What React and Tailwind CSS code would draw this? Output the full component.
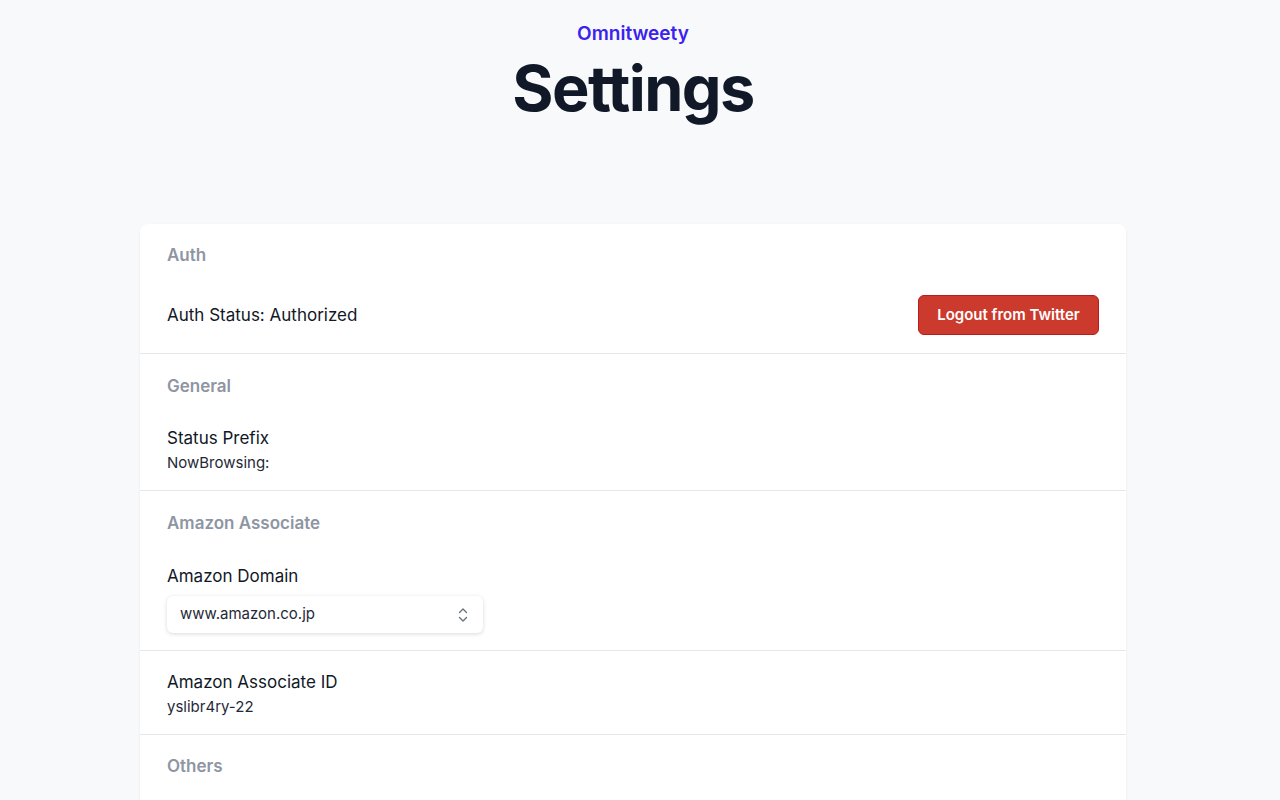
import React from "react";

function Section({ title, children, noHeader, top = "pt-[19px]", bottom = "pb-[18px]", gap = "mt-[28px]" }) {
  return (
    <div className={`border-b border-[#e5e7eb] px-[27px] last:border-b-0 ${top} ${bottom}`}>
      {!noHeader && (
        <h2 className="text-[17px] leading-[24px] font-semibold text-[#8e95a3]">{title}</h2>
      )}
      <div className={noHeader ? "" : gap}>{children}</div>
    </div>
  );
}

function Field({ label, value }) {
  return (
    <div>
      <div className="text-[17px] leading-[24px] text-[#111827]">{label}</div>
      <div className="mt-[3px] text-[15px] leading-[20px] text-[#1f2937]">{value}</div>
    </div>
  );
}

export default function App() {
  return (
    <div
      className="min-h-[800px] bg-[#f8f9fb] pr-[14px]"
      style={{ fontFamily: "Inter, 'Noto Sans', sans-serif" }}
    >
      <header className="flex flex-col items-center pt-[22px]">
        <div className="text-[19px] leading-[24px] font-semibold text-[#3b22ef]">Omnitweety</div>
        <h1 className="mt-[6px] text-[63px] leading-[72px] font-bold tracking-tight text-[#111827]">
          Settings
        </h1>
      </header>
      <main className="mx-auto mt-[100px] w-[986px] overflow-hidden rounded-lg bg-white shadow-[0_1px_3px_rgba(0,0,0,0.06)]">
        <Section title="Auth">
          <div className="flex h-[40px] items-center justify-between">
            <div className="text-[17px] leading-[24px] text-[#111827]">Auth Status: Authorized</div>
            <button className="h-[40px] w-[181px] rounded-md border border-[#b91c1c] bg-[#cb3a2c] text-[15px] font-semibold text-white">
              Logout from Twitter
            </button>
          </div>
        </Section>
        <Section title="General" top="pt-[20px]" bottom="pb-[17px]">
          <Field label="Status Prefix" value="NowBrowsing:" />
        </Section>
        <Section title="Amazon Associate" top="pt-[20px]" bottom="pb-[17px]" gap="mt-[29px]">
          <div className="text-[17px] leading-[24px] text-[#111827]">Amazon Domain</div>
          <div className="mt-[8px] flex h-[37px] w-[316px] items-center justify-between rounded-md bg-white pl-[13px] pr-[13px] shadow-[0_1px_4px_rgba(0,0,0,0.15)]">
            <span className="text-[15px] text-[#1f2937]">www.amazon.co.jp</span>
            <svg width="14" height="18" viewBox="0 0 14 18" fill="none" stroke="#6b7280" strokeWidth="1.4" strokeLinecap="round" strokeLinejoin="round">
              <path d="M3.5 6.5 7 3l3.5 3.5" />
              <path d="M3.5 11.5 7 15l3.5-3.5" />
            </svg>
          </div>
        </Section>
        <Section noHeader bottom="pb-[17px]">
          <Field label="Amazon Associate ID" value="yslibr4ry-22" />
        </Section>
        <Section title="Others">
          <div className="h-[40px]" />
        </Section>
      </main>
    </div>
  );
}
